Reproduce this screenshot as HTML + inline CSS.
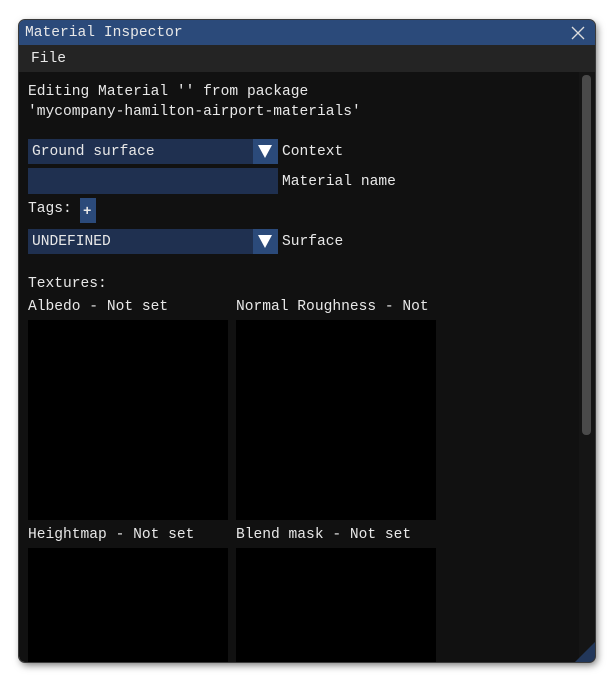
<!DOCTYPE html>
<html><head><style>
*{margin:0;padding:0;box-sizing:border-box}
body{width:614px;height:681px;background:#fff;position:relative;overflow:hidden;font-family:"Liberation Mono",monospace;font-size:14.6px;color:#e8e8e8}
.win{position:absolute;left:19px;top:20px;width:576px;height:642px;background:#111;border-radius:6px;overflow:hidden;box-shadow:2px 3px 8px rgba(0,0,0,.55);outline:1px solid #3a3a3a}
.title{position:absolute;left:0;top:0;width:100%;height:25px;background:#2b4a7a;line-height:26px;padding-left:6px}
.menu{position:absolute;left:0;top:25px;width:100%;height:27px;background:#242424;line-height:28px;padding-left:12px}
.a{position:absolute;white-space:nowrap}
.box{position:absolute;background:#1f3050}
.arr{position:absolute;background:#2b4a7a;width:25px;height:25px}
.arr:after{content:"";position:absolute;left:5px;top:6px;border-left:7px solid transparent;border-right:7px solid transparent;border-top:13px solid #fff}
.img{position:absolute;background:#000}
</style></head><body>
<div class="win">
<div class="title">Material Inspector</div>
<svg style="position:absolute;left:552px;top:6px" width="14" height="14"><path d="M1 1L13 13M13 1L1 13" stroke="#ddd" stroke-width="1.3"/></svg>
<div class="menu">File</div>
<div class="a" style="left:9px;top:62px;line-height:20px">Editing Material '' from package<br>'mycompany-hamilton-airport-materials'</div>
<div class="box" style="left:9px;top:119px;width:250px;height:25px"></div>
<div class="a" style="left:13px;top:124px">Ground surface</div>
<div class="arr" style="left:234px;top:119px"></div>
<div class="a" style="left:263px;top:124px">Context</div>
<div class="box" style="left:9px;top:148px;width:250px;height:26px"></div>
<div class="a" style="left:263px;top:154px">Material name</div>
<div class="a" style="left:9px;top:181px">Tags:</div>
<div class="box" style="left:61px;top:178px;width:16px;height:25px;background:#2b4a7a"></div>
<div class="a" style="left:64px;top:184px;font-size:14px;font-weight:bold">+</div>
<div class="box" style="left:9px;top:209px;width:250px;height:25px"></div>
<div class="a" style="left:13px;top:214px">UNDEFINED</div>
<div class="arr" style="left:234px;top:209px"></div>
<div class="a" style="left:263px;top:214px">Surface</div>
<div class="a" style="left:9px;top:256px">Textures:</div>
<div class="a" style="left:9px;top:279px">Albedo - Not set</div>
<div class="a" style="left:217px;top:279px">Normal Roughness - Not</div>
<div class="img" style="left:9px;top:300px;width:200px;height:200px"></div>
<div class="img" style="left:217px;top:300px;width:200px;height:200px"></div>
<div class="a" style="left:9px;top:507px">Heightmap - Not set</div>
<div class="a" style="left:217px;top:507px">Blend mask - Not set</div>
<div class="img" style="left:9px;top:528px;width:200px;height:120px"></div>
<div class="img" style="left:217px;top:528px;width:200px;height:120px"></div>
<div style="position:absolute;left:560px;top:52px;width:16px;height:590px;background:#151515"></div>
<div style="position:absolute;left:563px;top:55px;width:9px;height:360px;background:#4a4a4a;border-radius:4px"></div>
<svg style="position:absolute;left:556px;top:622px" width="20" height="20"><path d="M20 0L20 20L0 20Z" fill="#22375a"/></svg>
</div>
</body></html>
